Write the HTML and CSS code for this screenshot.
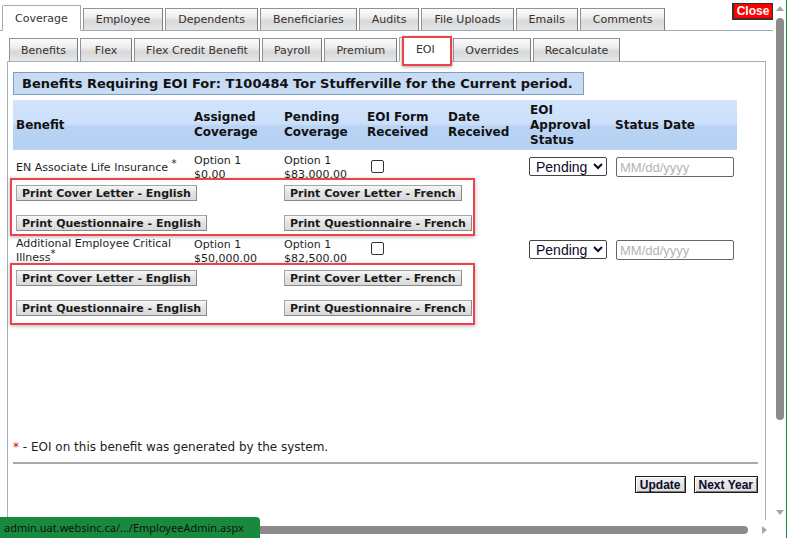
FILE: index.html
```html
<!DOCTYPE html>
<html lang="en">
<head>
<meta charset="utf-8">
<title>Employee Admin - EOI</title>
<link rel="stylesheet" href="styles.css">
</head>
<body>
<div class="screen">
  <div class="viewport">
    <div class="topbar">
      <ul class="tabs main-tabs">
        <li class="tab active">Coverage</li>
        <li class="tab">Employee</li>
        <li class="tab">Dependents</li>
        <li class="tab">Beneficiaries</li>
        <li class="tab">Audits</li>
        <li class="tab">File Uploads</li>
        <li class="tab">Emails</li>
        <li class="tab">Comments</li>
      </ul>
      <button class="close-btn" type="button">Close</button>
    </div>
    <div class="outer-panel">
      <ul class="tabs sub-tabs">
        <li class="tab">Benefits</li>
        <li class="tab">Flex</li>
        <li class="tab">Flex Credit Benefit</li>
        <li class="tab">Payroll</li>
        <li class="tab">Premium</li>
        <li class="tab active highlighted">EOI</li>
        <li class="tab">Overrides</li>
        <li class="tab">Recalculate</li>
      </ul>
      <div class="inner-panel">
        <div class="title">Benefits Requiring EOI For: T100484 Tor Stufferville for the Current period.</div>
        <div class="results">
          <div class="grid-row head">
            <div class="cell">Benefit</div>
            <div class="cell">Assigned<br>Coverage</div>
            <div class="cell">Pending<br>Coverage</div>
            <div class="cell">EOI Form<br>Received</div>
            <div class="cell">Date<br>Received</div>
            <div class="cell">EOI<br>Approval<br>Status</div>
            <div class="cell">Status Date</div>
          </div>

          <div class="grid-row item first">
            <div class="cell benefit">EN Associate Life Insurance <sup>*</sup></div>
            <div class="cell opt">Option 1<br>$0.00</div>
            <div class="cell opt">Option 1<br>$83,000.00</div>
            <div class="cell"><input class="check" type="checkbox"></div>
            <div class="cell"></div>
            <div class="cell"><select class="status"><option>Pending</option></select></div>
            <div class="cell"><input class="date" type="text" placeholder="MM/dd/yyyy"></div>
          </div>
          <div class="print-block">
            <button class="print-btn" type="button">Print Cover Letter - English</button>
            <button class="print-btn" type="button">Print Cover Letter - French</button>
            <button class="print-btn" type="button">Print Questionnaire - English</button>
            <button class="print-btn" type="button">Print Questionnaire - French</button>
          </div>

          <div class="grid-row item second">
            <div class="cell benefit">Additional Employee Critical Illness<sup>*</sup></div>
            <div class="cell opt">Option 1<br>$50,000.00</div>
            <div class="cell opt">Option 1<br>$82,500.00</div>
            <div class="cell"><input class="check" type="checkbox"></div>
            <div class="cell"></div>
            <div class="cell"><select class="status"><option>Pending</option></select></div>
            <div class="cell"><input class="date" type="text" placeholder="MM/dd/yyyy"></div>
          </div>
          <div class="print-block last">
            <button class="print-btn" type="button">Print Cover Letter - English</button>
            <button class="print-btn" type="button">Print Cover Letter - French</button>
            <button class="print-btn" type="button">Print Questionnaire - English</button>
            <button class="print-btn" type="button">Print Questionnaire - French</button>
          </div>
        </div>
        <p class="note"><span class="star">*</span> - EOI on this benefit was generated by the system.</p>
        <hr class="rule">
        <div class="actions">
          <button class="action-btn" type="button">Update</button>
          <button class="action-btn" type="button">Next Year</button>
        </div>
      </div>
    </div>
  </div>

  <div class="vscroll">
    <span class="arrow up"></span>
    <span class="vthumb"></span>
    <span class="spacer"></span>
    <span class="arrow down"></span>
  </div>
  <div class="green-edge"></div>
  <div class="hscroll">
    <span class="hthumb"></span>
    <span class="arrow right"></span>
  </div>
  <div class="corner"></div>

  <div class="status-bar">admin.uat.websinc.ca/.../EmployeeAdmin.aspx</div>
</div>
</body>
</html>
```

FILE: styles.css
```css
* { box-sizing: border-box; }

html, body {
  margin: 0;
  padding: 0;
  background: #fff;
}

body {
  font-family: "DejaVu Sans", Verdana, sans-serif;
  font-size: 11px;
  color: #1e1e1e;
  overflow: hidden;
}

.screen {
  position: relative;
  display: grid;
  grid-template-columns: 773px 13px 1px 2px;
  grid-template-rows: 520px 18px;
  width: 789px;
  height: 538px;
}

.viewport {
  grid-column: 1;
  grid-row: 1;
  overflow: hidden;
}

/* ---------- tabs ---------- */
.topbar {
  display: flex;
  align-items: flex-start;
  height: 30px;
  padding-left: 2px;
}

.tabs {
  display: flex;
  align-items: flex-end;
  list-style: none;
  margin: 0;
  padding: 0;
  gap: 2px;
}

.tab {
  position: relative;
  z-index: 1;
  padding: 0 12px;
  border: 1px solid #929292;
  border-right-color: #7b7b7b;
  border-bottom-color: #98abb8;
  background: linear-gradient(to bottom, #fbfbfb 0%, #eeeeee 38%, #d8d8d8 58%, #e6e6e6 100%);
  color: #333;
  white-space: nowrap;
  text-align: center;
}

.main-tabs {
  height: 31px;
  margin-bottom: -1px;
}

.main-tabs .tab {
  height: 23px;
  line-height: 21px;
}

.main-tabs .tab.active {
  height: 26px;
  line-height: 25px;
  background: #fff;
  border-color: #a8a8a8;
  border-bottom-color: #fff;
  border-top-left-radius: 2px;
}

.close-btn {
  margin: 3px 0 0 auto;
  width: 41px;
  height: 17px;
  padding: 0;
  border: 1px solid #333;
  border-left-width: 2px;
  border-bottom-width: 2px;
  background: #ff0000;
  color: #fff;
  font-family: "Liberation Sans", Arial, sans-serif;
  font-weight: bold;
  font-size: 12px;
  line-height: 13px;
}

.outer-panel {
  border-top: 1px solid #98abb8;
  padding: 6px 0 0 7px;
}

.sub-tabs {
  height: 25px;
  padding-left: 2px;
  margin-bottom: -1px;
}

.sub-tabs .tab {
  min-width: 52px;
  height: 24px;
  padding: 0 11px;
  line-height: 23px;
  border-bottom-color: #9fb2bf;
}

.sub-tabs .tab.active {
  height: 25px;
  line-height: 24px;
  background: #fff;
  border-color: #a8a8a8;
  border-bottom-color: #fff;
}

.tab.highlighted::after {
  content: "";
  position: absolute;
  top: -2px;
  left: 2px;
  right: -2px;
  bottom: -5px;
  border: 2px solid #eb4349;
  box-shadow: 0 1px 3px rgba(0, 0, 0, 0.35);
  pointer-events: none;
}

/* ---------- inner panel ---------- */
.inner-panel {
  width: 759px;
  height: 470px;
  border: 1px solid #9fb2bf;
  padding: 10px 7px 0 5px;
}

.title {
  display: inline-block;
  height: 23px;
  padding: 0 10px 0 8px;
  border: 1px solid #7f9ebd;
  background: #c7dbf5;
  color: #111;
  font-weight: bold;
  font-size: 13px;
  line-height: 21px;
  white-space: nowrap;
}

.results {
  height: 334px;
  margin-top: 5px;
  width: 724px;
}

.grid-row {
  display: grid;
  grid-template-columns: 178px 90px 83px 81px 82px 85px 125px;
}

.grid-row .cell {
  padding-left: 3px;
}

.head {
  height: 50px;
  align-items: center;
  background: linear-gradient(to bottom, #d2e4fb 0%, #cbdffa 48%, #b8d3f4 52%, #b5d1f3 100%);
  color: #111;
  font-weight: bold;
  font-size: 12px;
  line-height: 15px;
}

.item {
  align-items: start;
  line-height: 14px;
}

.item.first {
  height: 34px;
  padding-top: 4px;
}

.item.second {
  height: 32px;
  padding-top: 0;
}

.item.second .opt {
  padding-top: 2px;
}

.item .benefit {
  align-self: center;
}

.item.first .benefit {
  margin-top: -3px;
}

.item.second .benefit {
  align-self: start;
  padding-top: 1px;
}

.benefit sup {
  font-size: 10px;
  line-height: 0;
  vertical-align: 4px;
}

.check {
  appearance: none;
  -webkit-appearance: none;
  display: block;
  width: 13px;
  height: 13px;
  margin: 6px 0 0 4px;
  border: 1px solid #333;
  border-radius: 2px;
  background: #fff;
}

.status {
  display: block;
  width: 78px;
  height: 19px;
  margin: 3px 0 0 -1px;
  padding: 0 0 0 2px;
  border: 1px solid #444;
  border-radius: 2px;
  background: #fff;
  color: #0a0a2a;
  font-family: "Liberation Sans", Arial, sans-serif;
  font-size: 14px;
}

.item.second .status,
.item.second .date {
  margin-top: 4px;
}

.date {
  display: block;
  width: 118px;
  height: 20px;
  margin: 3px 0 0 1px;
  padding: 0 3px;
  border: 1px solid #666;
  border-radius: 2px;
  font-family: "Liberation Sans", Arial, sans-serif;
  font-size: 13px;
}

.date::placeholder {
  color: #b4b4b4;
}

/* ---------- print buttons (highlighted) ---------- */
.print-block {
  position: relative;
  z-index: 2;
  display: grid;
  grid-template-columns: 268px auto;
  justify-items: start;
  row-gap: 14px;
  width: 465px;
  margin: -6px 0 0 -3px;
  padding: 5px 0 3px 4px;
  border: 2px solid #eb4349;
  box-shadow: 0 1px 4px rgba(0, 0, 0, 0.3);
}

.print-block.last {
  margin-top: -5px;
  padding-bottom: 7px;
}

.print-btn {
  height: 16px;
  padding: 0 5px;
  border: 1px solid #a5a5a5;
  border-right-color: #8a8a8a;
  border-bottom-color: #8a8a8a;
  background: linear-gradient(to bottom, #f6f6f6, #e4e4e4 50%, #d9d9d9);
  color: #1a1a1a;
  font-family: "DejaVu Sans", Verdana, sans-serif;
  font-weight: bold;
  font-size: 11px;
  line-height: 13px;
  white-space: nowrap;
}

/* ---------- footer ---------- */
.note {
  margin: 6px 0 0;
  font-size: 12px;
  line-height: 14px;
  color: #222;
}

.star {
  color: #e00000;
}

.rule {
  margin: 8px 0 0;
  height: 0;
  border: 0;
  border-top: 2px solid #a9a9a9;
}

.actions {
  display: flex;
  justify-content: flex-end;
  gap: 8px;
  margin-top: 12px;
}

.action-btn {
  height: 17px;
  padding: 0 4px;
  border: 1px solid #1c1c1c;
  box-shadow: inset 1px 1px 0 #fff, inset -1px -1px 0 #7a7a7a;
  background: linear-gradient(to bottom, #f0f0f0, #dcdcdc);
  color: #0c0c2a;
  font-family: "Liberation Sans", Arial, sans-serif;
  font-weight: bold;
  font-size: 12px;
  line-height: 14px;
}

/* ---------- browser chrome ---------- */
.vscroll {
  grid-column: 2;
  grid-row: 1;
  display: flex;
  flex-direction: column;
  align-items: center;
  background: #fff;
  padding-left: 1px;
}

.arrow {
  width: 0;
  height: 0;
  border-style: solid;
}

.arrow.up {
  margin-top: 6px;
  border-width: 0 4px 5px 4px;
  border-color: transparent transparent #a6a6a6 transparent;
}

.vthumb {
  width: 8px;
  height: 402px;
  margin-top: 7px;
  border-radius: 4px;
  background: #8b8b8b;
}

.spacer {
  flex: 1;
}

.arrow.down {
  margin-bottom: 5px;
  border-width: 5px 4px 0 4px;
  border-color: #a6a6a6 transparent transparent transparent;
}

.green-edge {
  grid-column: 3;
  grid-row: 1 / span 2;
  background: #1a8a3e;
}

.hscroll {
  grid-column: 1;
  grid-row: 2;
  display: flex;
  align-items: center;
  padding-top: 1px;
  background: #fff;
}

.hthumb {
  width: 736px;
  height: 8px;
  margin-left: 12px;
  border-radius: 4px;
  background: #8b8b8b;
}

.arrow.right {
  margin-left: 14px;
  border-width: 4px 0 4px 5px;
  border-color: transparent transparent transparent #a6a6a6;
}

.corner {
  grid-column: 2;
  grid-row: 2;
  background: #fff;
}

.status-bar {
  position: absolute;
  left: 0;
  bottom: 0;
  width: 260px;
  height: 21px;
  padding-left: 4px;
  border-top-right-radius: 4px;
  background: #198a3d;
  color: #111;
  font-family: "Noto Sans", "Open Sans", sans-serif;
  font-size: 11px;
  line-height: 21px;
  white-space: nowrap;
}
```
